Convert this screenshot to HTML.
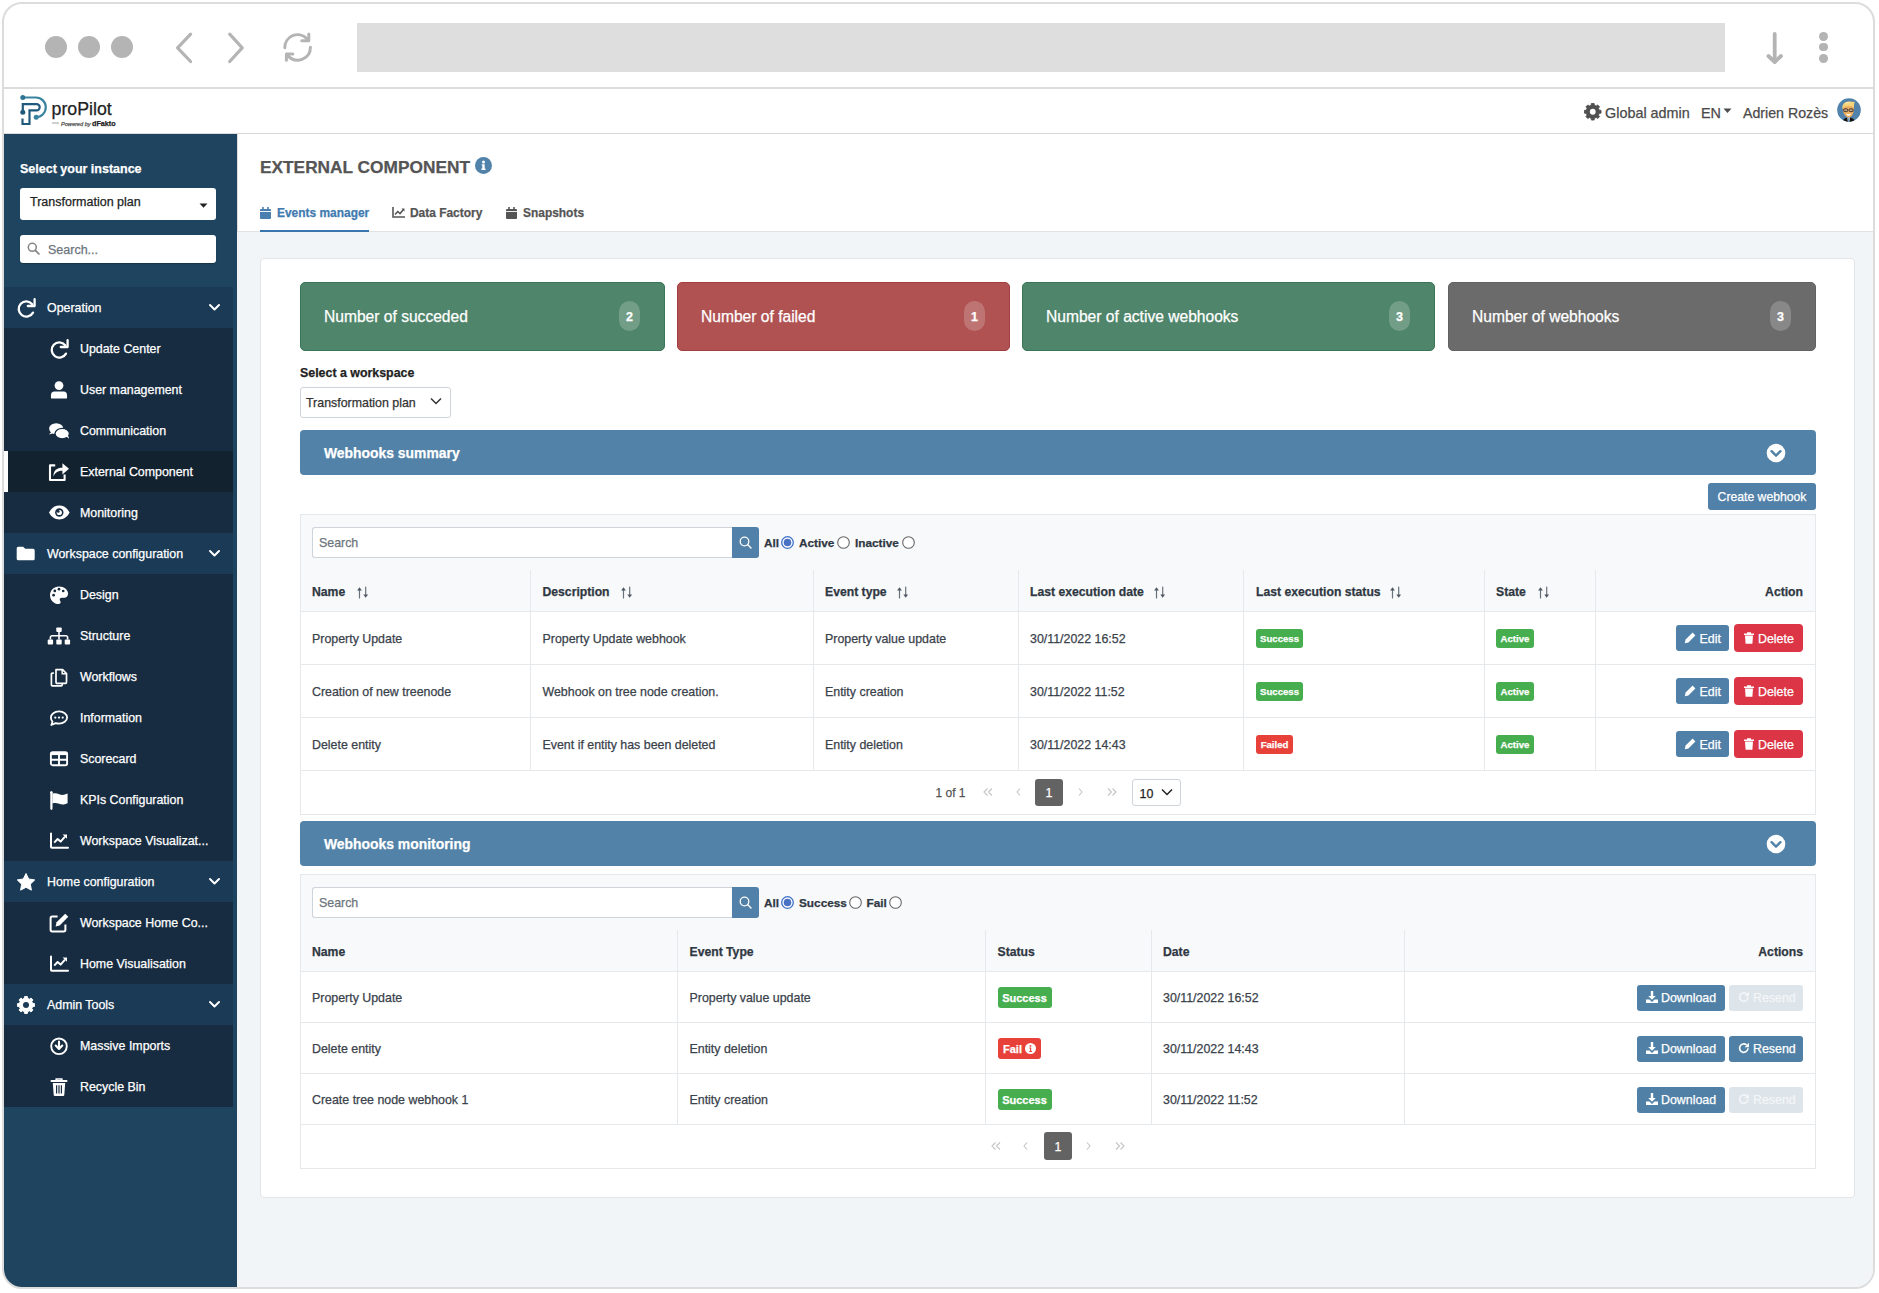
<!DOCTYPE html>
<html><head><meta charset="utf-8">
<style>
*{box-sizing:border-box;margin:0;padding:0}
html,body{width:1879px;height:1293px;background:#fff;overflow:hidden;font-family:"Liberation Sans",sans-serif;}
.abs{position:absolute}
#frame{position:absolute;left:2px;top:2px;width:1873px;height:1287px;border:2px solid #dcdcdc;border-radius:20px;overflow:hidden;background:#fff}
#pg{position:absolute;left:-4px;top:-4px;width:1879px;height:1293px}
.sep{position:absolute;background:#dcdcdc}
.dot{position:absolute;width:22px;height:22px;border-radius:50%;background:#b4b4b4}
#side{position:absolute;left:4px;top:134px;width:233px;height:1160px;background:#1e445f}
.sh{position:absolute;left:4px;width:229px;height:41px;background:#1b3955;color:#fff;font-size:13px}
.si{position:absolute;left:4px;width:229px;height:41px;background:#172b3f;color:#fff;font-size:13px}
.txt{position:absolute;white-space:nowrap;-webkit-text-stroke:0.25px currentColor}
.st{font-size:12.4px;color:#fff}
#main{position:absolute;left:237px;top:134px;width:1636px;height:1160px;background:#f2f5f7}

</style></head><body>
<div id="frame"><div id="pg">
<!-- toolbar -->
  <div class="dot" style="left:45px;top:36px"></div>
  <div class="dot" style="left:78px;top:36px"></div>
  <div class="dot" style="left:111px;top:36px"></div>
  <svg class="abs" style="left:170px;top:28px" width="80" height="40" viewBox="0 0 80 40">
    <polyline points="20.6,6.2 7.6,19.8 20.6,33.5" fill="none" stroke="#b4b4b4" stroke-width="3.2" stroke-linecap="round" stroke-linejoin="round"/>
    <polyline points="59.7,6.2 72.2,19.8 59.7,33.5" fill="none" stroke="#b4b4b4" stroke-width="3.2" stroke-linecap="round" stroke-linejoin="round"/>
  </svg>
  <svg class="abs" style="left:280px;top:30px" width="36" height="36" viewBox="0 0 36 36">
    <path d="M4.8 17.8A12.8 12.8 0 0 1 26.8 8.6" fill="none" stroke="#b4b4b4" stroke-width="3" stroke-linecap="round"/>
    <path d="M30.4 17.2A12.8 12.8 0 0 1 8.6 26.4" fill="none" stroke="#b4b4b4" stroke-width="3" stroke-linecap="round"/>
    <polyline points="28.8,4 28.8,10.8 21.8,10.8" fill="none" stroke="#b4b4b4" stroke-width="3" stroke-linecap="round" stroke-linejoin="round"/>
    <polyline points="6.4,30.3 6.4,24 12.8,24" fill="none" stroke="#b4b4b4" stroke-width="3" stroke-linecap="round" stroke-linejoin="round"/>
  </svg>
  <div class="abs" style="left:357px;top:23px;width:1368px;height:49px;background:#dedede"></div>
  <svg class="abs" style="left:1760px;top:28px" width="30" height="40" viewBox="0 0 30 40">
    <line x1="14.7" y1="6" x2="14.7" y2="33" stroke="#b4b4b4" stroke-width="3.8" stroke-linecap="round"/>
    <polyline points="8.4,28 14.7,34 21,28" fill="none" stroke="#b4b4b4" stroke-width="3.8" stroke-linecap="round" stroke-linejoin="round"/>
  </svg>
  <div class="abs" style="left:1819px;top:31.8px;width:8.8px;height:8.8px;border-radius:50%;background:#b4b4b4"></div>
  <div class="abs" style="left:1819px;top:42.6px;width:8.8px;height:8.8px;border-radius:50%;background:#b4b4b4"></div>
  <div class="abs" style="left:1819px;top:54.1px;width:8.8px;height:8.8px;border-radius:50%;background:#b4b4b4"></div>
  <div class="sep" style="left:0;top:87px;width:1879px;height:2px"></div>

  
<!-- app header -->
<div class="sep" style="left:0;top:133px;width:1879px;height:1px;background:#d9d9d9"></div>
<svg class="abs" style="left:15px;top:90px" width="40" height="40" viewBox="0 0 40 40">
  <path d="M7.8 7.5H21A9.8 9.8 0 0 1 21 27.1" fill="none" stroke="#3a83a0" stroke-width="2.2"/>
  <circle cx="7.8" cy="7.5" r="2.5" fill="#2f7593"/>
  <circle cx="21.2" cy="27.2" r="2.5" fill="#3a83a0"/>
  <path d="M7.8 22.3V14.2H21.6A3.1 3.1 0 0 1 21.6 20.4H14.5V34H7.5V28.5" fill="none" stroke="#1f5a7c" stroke-width="2.2"/>
  <circle cx="7.8" cy="22.3" r="2.5" fill="#1f5a7c"/>
</svg>
<div class="txt" style="left:51.5px;top:98.5px;line-height:20px;font-size:17.8px;color:#222">proPilot</div>
<div class="abs" style="left:51.6px;top:122px;width:7px;height:2px;background:#d0d0d0"></div>
<div class="txt" style="left:61px;top:119.5px;line-height:7px;font-size:5.6px;color:#555;font-style:italic">Powered by <b style="font-size:7.2px;font-style:normal;color:#222">dFakto</b></div>
<svg class="abs" style="left:1584px;top:103px" width="17.5" height="17.5" viewBox="0 0 20 20"><path d="M8.17 2.62 L8.42 0.53 L11.58 0.53 L11.83 2.62 L13.92 3.49 L15.58 2.19 L17.81 4.42 L16.51 6.08 L17.38 8.17 L19.47 8.42 L19.47 11.58 L17.38 11.83 L16.51 13.92 L17.81 15.58 L15.58 17.81 L13.92 16.51 L11.83 17.38 L11.58 19.47 L8.42 19.47 L8.17 17.38 L6.08 16.51 L4.42 17.81 L2.19 15.58 L3.49 13.92 L2.62 11.83 L0.53 11.58 L0.53 8.42 L2.62 8.17 L3.49 6.08 L2.19 4.42 L4.42 2.19 L6.08 3.49Z" fill="#505050" stroke="#505050" stroke-width="1" stroke-linejoin="round"/><circle cx="10" cy="10" r="3.3" fill="#fff"/></svg>
<div class="txt" style="left:1605px;top:102.6px;line-height:20px;font-size:14.4px;color:#4a4a4a">Global admin</div>
<div class="txt" style="left:1701px;top:102.6px;line-height:20px;font-size:14.4px;color:#4a4a4a">EN</div>
<svg class="abs" style="left:1723px;top:108px" width="9" height="6" viewBox="0 0 9 6"><path d="M0.5 0.5h8L4.5 5z" fill="#4a4a4a"/></svg>
<div class="txt" style="left:1743px;top:102.6px;line-height:20px;font-size:14.2px;color:#4a4a4a">Adrien Rozès</div>
<svg class="abs" style="left:1837px;top:98px" width="24" height="24" viewBox="0 0 24 24">
  <defs><clipPath id="av"><circle cx="12" cy="12" r="11.8"/></clipPath></defs>
  <circle cx="12" cy="12" r="11.8" fill="#5182ab"/>
  <g clip-path="url(#av)">
    <path d="M5.5 24c.5-3 2.5-4.6 6.2-4.6s5.8 1.6 6.2 4.6z" fill="#111"/>
    <path d="M10.3 19.6h2.6l-.6 4.4h-1.4z" fill="#fff"/>
    <path d="M11 20.2h1.2l-.1 3.8h-1z" fill="#5a9ad6"/>
    <path d="M5.8 10.5c0-2.5 2.2-3.8 5.6-3.8s5.6 1.5 5.6 3.6c0 4.5-2 9.2-5.2 9.2-3.4 0-6-4.5-6-9z" fill="#f0b060"/>
    <path d="M5.4 11c-.3-4.5 2-7.4 6.4-7.4 2.8 0 4.6.5 6 .2-.5 1.4-.8 2.6-.8 5.4-2-1-4.5-1.4-7-1.2-2 .2-3.6 1.2-4.6 3z" fill="#f6d27a"/>
    <path d="M7.5 5.5c1.5-1 4-1.3 6.5-.8-1.5.4-4 .6-6.5.8z" fill="#fff3c0"/>
    <rect x="6.6" y="10.8" width="4.2" height="2.8" rx="1.2" fill="#c9a07a" stroke="#2a2a2a" stroke-width=".9"/>
    <rect x="12" y="10.8" width="4.2" height="2.8" rx="1.2" fill="#c9a07a" stroke="#2a2a2a" stroke-width=".9"/>
    <path d="M9.2 15.6c1.5.9 3.3.9 4.8 0-.4 1.6-1.3 2.2-2.4 2.2s-2-.6-2.4-2.2z" fill="#fff"/>
  </g>
</svg>

<div id="side"></div>


  <div class="txt" style="left:20px;top:159px;line-height:21px;font-size:12.5px;font-weight:bold;color:#fff">Select your instance</div>
  <div class="abs" style="left:20px;top:188px;width:196px;height:32px;background:#fff;border-radius:3px"></div>
  <div class="txt" style="left:30px;top:192.3px;line-height:21px;font-size:12.5px;color:#222">Transformation plan</div>
  <svg class="abs" style="left:199px;top:203px" width="9" height="5" viewBox="0 0 9 5"><path d="M0.5 0.5h8L4.5 4.8z" fill="#222"/></svg>
  <div class="abs" style="left:20px;top:235px;width:196px;height:28px;background:#fff;border-radius:3px;box-shadow:0 1px 1px rgba(0,0,0,.25)"></div>
  <svg class="abs" style="left:27px;top:242px" width="13" height="13" viewBox="0 0 13 13"><circle cx="5.3" cy="5.3" r="4" fill="none" stroke="#888" stroke-width="1.6"/><path d="M8.3 8.3l3.6 3.6" stroke="#888" stroke-width="1.8" stroke-linecap="round"/></svg>
  <div class="txt" style="left:48px;top:240px;line-height:21px;font-size:12.5px;color:#6c757d">Search...</div>
<div class="sh" style="top:287px;background:#1a3a55"></div>
<svg class="abs" style="left:16px;top:297.5px;overflow:visible" width="20" height="20" viewBox="0 0 20 20"><path d="M16.2 6.2A7.6 7.6 0 1 0 17 14.6" fill="none" stroke="#fff" stroke-width="2.3" stroke-linecap="round"/><path d="M18.6 1.2v6.8h-6.8" fill="none" stroke="#fff" stroke-width="2.3" stroke-linecap="round" stroke-linejoin="round"/></svg>
<div class="txt st" style="left:47px;top:287.6px;line-height:41px">Operation</div>
<svg class="abs" style="left:208px;top:303px" width="13" height="9" viewBox="0 0 13 9"><polyline points="2,2 6.5,6.5 11,2" fill="none" stroke="#fff" stroke-width="2" stroke-linecap="round" stroke-linejoin="round"/></svg>
<div class="si" style="top:328px;background:#172c40"></div>
<svg class="abs" style="left:49px;top:338.5px;overflow:visible" width="20" height="20" viewBox="0 0 20 20"><path d="M16.2 6.2A7.6 7.6 0 1 0 17 14.6" fill="none" stroke="#fff" stroke-width="2.3" stroke-linecap="round"/><path d="M18.6 1.2v6.8h-6.8" fill="none" stroke="#fff" stroke-width="2.3" stroke-linecap="round" stroke-linejoin="round"/></svg>
<div class="txt st" style="left:80px;top:328.6px;line-height:41px">Update Center</div>
<div class="si" style="top:369px;background:#172c40"></div>
<svg class="abs" style="left:49px;top:379.5px;overflow:visible" width="20" height="20" viewBox="0 0 20 20"><circle cx="10" cy="5.6" r="4.4" fill="#fff"/><path d="M4.6 11.6h10.8a4.2 4.2 0 0 1 4.2 4.2v1.6a1.2 1.2 0 0 1-1.2 1.2H1.6a1.2 1.2 0 0 1-1.2-1.2v-1.6a4.2 4.2 0 0 1 4.2-4.2z" fill="#fff" transform="translate(1.6 0) scale(.84 1)"/></svg>
<div class="txt st" style="left:80px;top:369.6px;line-height:41px">User management</div>
<div class="si" style="top:410px;background:#172c40"></div>
<svg class="abs" style="left:49px;top:420.5px;overflow:visible" width="20" height="20" viewBox="0 0 20 20"><ellipse cx="7.2" cy="7.6" rx="7.1" ry="5.4" fill="#fff"/><path d="M0 13.4l3.2-3.5 2.2 2.2z" fill="#fff"/><ellipse cx="13.2" cy="12.6" rx="7.2" ry="5.2" fill="#fff" stroke="#172c40" stroke-width="1.3"/><path d="M20.2 17.8l-3.6-2.8 2-1.5z" fill="#fff"/></svg>
<div class="txt st" style="left:80px;top:410.6px;line-height:41px">Communication</div>
<div class="si" style="top:451px;background:#13222f"></div>
<div class="abs" style="left:4px;top:451px;width:4px;height:41px;background:#fff"></div>
<svg class="abs" style="left:49px;top:461.5px;overflow:visible" width="20" height="20" viewBox="0 0 20 20"><path d="M6.2 3.4H1v14.6h14.6v-5.6" fill="none" stroke="#fff" stroke-width="2.1" stroke-linejoin="round"/><path d="M4.4 14.5c0-6.2 3.5-8.8 9-8.8V1.2l6.6 5.6-6.6 5.6V8.8c-4 0-7.2 1.4-9 5.7z" fill="#fff"/></svg>
<div class="txt st" style="left:80px;top:451.6px;line-height:41px">External Component</div>
<div class="si" style="top:492px;background:#172c40"></div>
<svg class="abs" style="left:49px;top:502.5px;overflow:visible" width="20" height="20" viewBox="0 0 20 20"><path d="M0 9.5C2.6 4.6 6 2.6 10.3 2.6S18 4.6 20.6 9.5c-2.6 4.9-6 6.9-10.3 6.9S2.6 14.4 0 9.5z" fill="#fff"/><circle cx="10.3" cy="9.5" r="4.2" fill="#172c40"/><circle cx="10.3" cy="9.5" r="2.6" fill="#fff"/><circle cx="9.2" cy="8.4" r="1.4" fill="#172c40"/></svg>
<div class="txt st" style="left:80px;top:492.6px;line-height:41px">Monitoring</div>
<div class="sh" style="top:533px;background:#1a3a55"></div>
<svg class="abs" style="left:16px;top:543.5px;overflow:visible" width="20" height="20" viewBox="0 0 20 20"><path d="M0.7 4.2a1.5 1.5 0 0 1 1.5-1.5h5l2 2.1h7.9a1.6 1.6 0 0 1 1.6 1.6v8.4a1.5 1.5 0 0 1-1.5 1.5H2.2a1.5 1.5 0 0 1-1.5-1.5z" fill="#fff"/></svg>
<div class="txt st" style="left:47px;top:533.6px;line-height:41px">Workspace configuration</div>
<svg class="abs" style="left:208px;top:549px" width="13" height="9" viewBox="0 0 13 9"><polyline points="2,2 6.5,6.5 11,2" fill="none" stroke="#fff" stroke-width="2" stroke-linecap="round" stroke-linejoin="round"/></svg>
<div class="si" style="top:574px;background:#172c40"></div>
<svg class="abs" style="left:49px;top:584.5px;overflow:visible" width="20" height="20" viewBox="0 0 20 20"><path d="M10 1.5C5 1.5 1 5.4 1 10.2c0 4.9 4 8.9 8.6 8.9 1.5 0 2-1 2-2 0-1.2-.9-1.4-.9-2.5 0-1.1.8-1.8 2-1.8h2.6c2.2 0 3.8-1.7 3.8-4C19.1 4.6 15 1.5 10 1.5z" fill="#fff"/><circle cx="4.6" cy="10.2" r="1.35" fill="#172c40"/><circle cx="5.8" cy="5.9" r="1.35" fill="#172c40"/><circle cx="10" cy="4.2" r="1.35" fill="#172c40"/><circle cx="14.2" cy="6" r="1.35" fill="#172c40"/></svg>
<div class="txt st" style="left:80px;top:574.6px;line-height:41px">Design</div>
<div class="si" style="top:615px;background:#172c40"></div>
<svg class="abs" style="left:49px;top:625.5px;overflow:visible" width="20" height="20" viewBox="0 0 20 20"><rect x="7.3" y="1.4" width="5.4" height="4.6" rx=".9" fill="#fff"/><rect x="-1.3" y="13.6" width="5.4" height="4.9" rx=".9" fill="#fff"/><rect x="7.3" y="13.6" width="5.4" height="4.9" rx=".9" fill="#fff"/><rect x="15.7" y="13.6" width="5.4" height="4.9" rx=".9" fill="#fff"/><path d="M10 6v7.6M1.4 13.6v-2.2a1.6 1.6 0 0 1 1.6-1.6h14a1.6 1.6 0 0 1 1.6 1.6v2.2" fill="none" stroke="#fff" stroke-width="1.6"/></svg>
<div class="txt st" style="left:80px;top:615.6px;line-height:41px">Structure</div>
<div class="si" style="top:656px;background:#172c40"></div>
<svg class="abs" style="left:49px;top:666.5px;overflow:visible" width="20" height="20" viewBox="0 0 20 20"><path d="M7 2.6h6.6l3.9 3.9v8.8c0 .6-.4 1-1 1H8c-.6 0-1-.4-1-1z" fill="none" stroke="#fff" stroke-width="1.7" stroke-linejoin="round"/><path d="M13.2 2.6v4.2h4.2" fill="none" stroke="#fff" stroke-width="1.5"/><path d="M4.8 6.2H3.4c-.6 0-1 .4-1 1v10.6c0 .6.4 1 1 1h8.8c.6 0 1-.4 1-1v-1.4" fill="none" stroke="#fff" stroke-width="1.7" stroke-linejoin="round"/></svg>
<div class="txt st" style="left:80px;top:656.6px;line-height:41px">Workflows</div>
<div class="si" style="top:697px;background:#172c40"></div>
<svg class="abs" style="left:49px;top:707.5px;overflow:visible" width="20" height="20" viewBox="0 0 20 20"><path d="M10 3.4c4.5 0 8.1 2.7 8.1 6.1s-3.6 6.1-8.1 6.1c-1.2 0-2.3-.2-3.3-.5L2.3 17l1.2-3.3C2.5 12.6 1.9 11.1 1.9 9.5c0-3.4 3.6-6.1 8.1-6.1z" fill="none" stroke="#fff" stroke-width="1.8" stroke-linejoin="round"/><circle cx="6.3" cy="9.6" r="1.15" fill="#fff"/><circle cx="10" cy="9.6" r="1.15" fill="#fff"/><circle cx="13.7" cy="9.6" r="1.15" fill="#fff"/></svg>
<div class="txt st" style="left:80px;top:697.6px;line-height:41px">Information</div>
<div class="si" style="top:738px;background:#172c40"></div>
<svg class="abs" style="left:49px;top:748.5px;overflow:visible" width="20" height="20" viewBox="0 0 20 20"><rect x="1.9" y="3.1" width="16.2" height="13.1" rx="1.8" fill="none" stroke="#fff" stroke-width="1.9"/><rect x="1.9" y="3.1" width="16.2" height="3" fill="#fff"/><path d="M1.9 10.8h16.2M10 5v11" stroke="#fff" stroke-width="1.9"/></svg>
<div class="txt st" style="left:80px;top:738.6px;line-height:41px">Scorecard</div>
<div class="si" style="top:779px;background:#172c40"></div>
<svg class="abs" style="left:49px;top:789.5px;overflow:visible" width="20" height="20" viewBox="0 0 20 20"><path d="M2.4 2.6v16.2" stroke="#fff" stroke-width="2.2" stroke-linecap="round"/><circle cx="2.4" cy="2.4" r="1.2" fill="#fff"/><path d="M3.4 3.8c2.4-1 4.6-.4 6.8.4 2.4.9 4.6 1.1 8.4-.6v9.6c-3.8 1.7-6 1.5-8.4.6-2.2-.8-4.4-1.4-6.8-.4z" fill="#fff"/></svg>
<div class="txt st" style="left:80px;top:779.6px;line-height:41px">KPIs Configuration</div>
<div class="si" style="top:820px;background:#172c40"></div>
<svg class="abs" style="left:49px;top:830.5px;overflow:visible" width="20" height="20" viewBox="0 0 20 20"><path d="M2 2.5v13.4c0 .5.3.8.8.8H19" fill="none" stroke="#fff" stroke-width="2" stroke-linecap="round"/><path d="M5.2 11.6l3.4-3.6 3 2.6 4.4-5" fill="none" stroke="#fff" stroke-width="2" stroke-linejoin="round"/><path d="M13.6 3.4h4.4v4.4z" fill="#fff"/></svg>
<div class="txt st" style="left:80px;top:820.6px;line-height:41px">Workspace Visualizat...</div>
<div class="sh" style="top:861px;background:#1a3a55"></div>
<svg class="abs" style="left:16px;top:871.5px;overflow:visible" width="20" height="20" viewBox="0 0 20 20"><path d="M10 1.5l2.7 5.5 6 .9-4.35 4.25 1.03 6L10 15.3l-5.38 2.85 1.03-6L1.3 7.9l6-.9z" fill="#fff" stroke="#fff" stroke-width="1" stroke-linejoin="round"/></svg>
<div class="txt st" style="left:47px;top:861.6px;line-height:41px">Home configuration</div>
<svg class="abs" style="left:208px;top:877px" width="13" height="9" viewBox="0 0 13 9"><polyline points="2,2 6.5,6.5 11,2" fill="none" stroke="#fff" stroke-width="2" stroke-linecap="round" stroke-linejoin="round"/></svg>
<div class="si" style="top:902px;background:#172c40"></div>
<svg class="abs" style="left:49px;top:912.5px;overflow:visible" width="20" height="20" viewBox="0 0 20 20"><path d="M8.6 3.6H3.2c-.9 0-1.6.7-1.6 1.6v11.6c0 .9.7 1.6 1.6 1.6h11.6c.9 0 1.6-.7 1.6-1.6v-5.4" fill="none" stroke="#fff" stroke-width="2" stroke-linejoin="round"/><path d="M16.2 0.7l3.1 3.1-8.6 8.6-4.1 1 1-4.1z" fill="#fff"/></svg>
<div class="txt st" style="left:80px;top:902.6px;line-height:41px">Workspace Home Co...</div>
<div class="si" style="top:943px;background:#172c40"></div>
<svg class="abs" style="left:49px;top:953.5px;overflow:visible" width="20" height="20" viewBox="0 0 20 20"><path d="M2 2.5v13.4c0 .5.3.8.8.8H19" fill="none" stroke="#fff" stroke-width="2" stroke-linecap="round"/><path d="M5.2 11.6l3.4-3.6 3 2.6 4.4-5" fill="none" stroke="#fff" stroke-width="2" stroke-linejoin="round"/><path d="M13.6 3.4h4.4v4.4z" fill="#fff"/></svg>
<div class="txt st" style="left:80px;top:943.6px;line-height:41px">Home Visualisation</div>
<div class="sh" style="top:984px;background:#1a3a55"></div>
<svg class="abs" style="left:16px;top:994.5px;overflow:visible" width="20" height="20" viewBox="0 0 20 20"><path d="M8.17 2.62 L8.42 0.53 L11.58 0.53 L11.83 2.62 L13.92 3.49 L15.58 2.19 L17.81 4.42 L16.51 6.08 L17.38 8.17 L19.47 8.42 L19.47 11.58 L17.38 11.83 L16.51 13.92 L17.81 15.58 L15.58 17.81 L13.92 16.51 L11.83 17.38 L11.58 19.47 L8.42 19.47 L8.17 17.38 L6.08 16.51 L4.42 17.81 L2.19 15.58 L3.49 13.92 L2.62 11.83 L0.53 11.58 L0.53 8.42 L2.62 8.17 L3.49 6.08 L2.19 4.42 L4.42 2.19 L6.08 3.49Z" fill="#fff" stroke="#fff" stroke-width="1" stroke-linejoin="round" transform="translate(1 1) scale(.9)"/><circle cx="10" cy="10" r="3" fill="#1a3a55"/></svg>
<div class="txt st" style="left:47px;top:984.6px;line-height:41px">Admin Tools</div>
<svg class="abs" style="left:208px;top:1000px" width="13" height="9" viewBox="0 0 13 9"><polyline points="2,2 6.5,6.5 11,2" fill="none" stroke="#fff" stroke-width="2" stroke-linecap="round" stroke-linejoin="round"/></svg>
<div class="si" style="top:1025px;background:#172c40"></div>
<svg class="abs" style="left:49px;top:1035.5px;overflow:visible" width="20" height="20" viewBox="0 0 20 20"><circle cx="10" cy="10.3" r="7.8" fill="none" stroke="#fff" stroke-width="1.9"/><path d="M10 5.6v7.2M6.7 9.6l3.3 3.3 3.3-3.3" fill="none" stroke="#fff" stroke-width="2.1" stroke-linecap="round" stroke-linejoin="round"/></svg>
<div class="txt st" style="left:80px;top:1025.6px;line-height:41px">Massive Imports</div>
<div class="si" style="top:1066px;background:#172c40"></div>
<svg class="abs" style="left:49px;top:1076.5px;overflow:visible" width="20" height="20" viewBox="0 0 20 20"><path d="M2.6 4h14.8" stroke="#fff" stroke-width="2.2" stroke-linecap="round"/><path d="M7.2 3.6V2h5.6v1.6" fill="none" stroke="#fff" stroke-width="1.6"/><path d="M3.8 6h12.4l-.9 12a1.2 1.2 0 0 1-1.2 1.1H5.9a1.2 1.2 0 0 1-1.2-1.1z" fill="#fff"/><path d="M7.6 8.2v8.4M10 8.2v8.4M12.4 8.2v8.4" stroke="#172c40" stroke-width="1.2"/></svg>
<div class="txt st" style="left:80px;top:1066.6px;line-height:41px">Recycle Bin</div>
<div id="main"></div>
<div class="abs" style="left:237px;top:134px;width:1636px;height:98px;background:#fff;border-bottom:1px solid #dfe3e6;border-left:1px solid #dcdcdc"></div>
<div class="txt" style="left:260px;top:157.3px;line-height:20px;font-size:17.3px;color:#555;font-weight:bold;">EXTERNAL COMPONENT</div>
<svg class="abs" style="left:474.7px;top:156.5px" width="17" height="17" viewBox="0 0 17 17"><circle cx="8.5" cy="8.5" r="8.5" fill="#5082aa"/><circle cx="8.5" cy="5.1" r="1.5" fill="#fff"/><path d="M6.7 7.3h3v4.3h0.8v1.3H6.4v-1.3h0.9V8.6H6.7z" fill="#fff"/></svg>
<svg class="abs" style="left:260px;top:207px" width="11" height="12" viewBox="0 0 11 12"><rect x="0" y="2" width="11" height="10" rx="1" fill="#4a7fb0"/><rect x="2.2" y="0" width="1.6" height="3" fill="#4a7fb0"/><rect x="7.2" y="0" width="1.6" height="3" fill="#4a7fb0"/><rect x="0" y="4" width="11" height=".9" fill="#fff"/></svg>
<div class="txt" style="left:277px;top:203.0px;line-height:20px;font-size:11.95px;color:#3f7bb0;font-weight:bold;">Events manager</div>
<div class="abs" style="left:260px;top:230px;width:109px;height:2px;background:#3a76ad"></div>
<svg class="abs" style="left:392px;top:207px" width="13" height="11" viewBox="0 0 13 11"><path d="M1 0v10h12" fill="none" stroke="#555" stroke-width="1.6"/><path d="M3 7.5l2.8-3 2.2 2 3.5-4" fill="none" stroke="#555" stroke-width="1.6"/><path d="M9.5 1.5h3v3z" fill="#555"/></svg>
<div class="txt" style="left:410px;top:203.0px;line-height:20px;font-size:11.95px;color:#555;font-weight:bold;">Data Factory</div>
<svg class="abs" style="left:506px;top:207px" width="11" height="12" viewBox="0 0 11 12"><rect x="0" y="2" width="11" height="10" rx="1" fill="#555"/><rect x="2.2" y="0" width="1.6" height="3" fill="#555"/><rect x="7.2" y="0" width="1.6" height="3" fill="#555"/><rect x="0" y="4" width="11" height=".9" fill="#fff"/></svg>
<div class="txt" style="left:523px;top:203.0px;line-height:20px;font-size:11.95px;color:#555;font-weight:bold;">Snapshots</div>
<div class="abs" style="left:260px;top:258px;width:1595px;height:940px;background:#fff;border:1px solid #e3e5e8;border-radius:4px"></div>
<div class="abs" style="left:300px;top:282px;width:365px;height:69px;background:#4f856a;border:1px solid #3a7556;border-radius:5px"></div>
<div class="txt" style="left:324px;top:307.1px;line-height:20px;font-size:15.6px;color:#fff;">Number of succeded</div>
<div class="abs" style="left:619px;top:301px;width:21px;height:30px;background:rgba(255,255,255,.2);border-radius:10.5px"></div>
<div class="txt" style="left:529.5px;width:200px;text-align:center;top:307.1px;line-height:20px;font-size:12.5px;color:#fff;font-weight:bold;">2</div>
<div class="abs" style="left:677px;top:282px;width:333px;height:69px;background:#b05252;border:1px solid #a33d40;border-radius:5px"></div>
<div class="txt" style="left:701px;top:307.1px;line-height:20px;font-size:15.6px;color:#fff;">Number of failed</div>
<div class="abs" style="left:964px;top:301px;width:21px;height:30px;background:rgba(255,255,255,.2);border-radius:10.5px"></div>
<div class="txt" style="left:874.5px;width:200px;text-align:center;top:307.1px;line-height:20px;font-size:12.5px;color:#fff;font-weight:bold;">1</div>
<div class="abs" style="left:1022px;top:282px;width:413px;height:69px;background:#4f856a;border:1px solid #3a7556;border-radius:5px"></div>
<div class="txt" style="left:1046px;top:307.1px;line-height:20px;font-size:15.6px;color:#fff;">Number of active webhooks</div>
<div class="abs" style="left:1389px;top:301px;width:21px;height:30px;background:rgba(255,255,255,.2);border-radius:10.5px"></div>
<div class="txt" style="left:1299.5px;width:200px;text-align:center;top:307.1px;line-height:20px;font-size:12.5px;color:#fff;font-weight:bold;">3</div>
<div class="abs" style="left:1448px;top:282px;width:368px;height:69px;background:#6b6b6b;border:1px solid #626262;border-radius:5px"></div>
<div class="txt" style="left:1472px;top:307.1px;line-height:20px;font-size:15.6px;color:#fff;">Number of webhooks</div>
<div class="abs" style="left:1770px;top:301px;width:21px;height:30px;background:rgba(255,255,255,.2);border-radius:10.5px"></div>
<div class="txt" style="left:1680.5px;width:200px;text-align:center;top:307.1px;line-height:20px;font-size:12.5px;color:#fff;font-weight:bold;">3</div>
<div class="txt" style="left:300px;top:362.6px;line-height:20px;font-size:12.4px;color:#222;font-weight:bold;">Select a workspace</div>
<div class="abs" style="left:300px;top:387px;width:151px;height:31px;background:#fff;border:1px solid #ced4da;border-radius:3px"></div>
<div class="txt" style="left:306px;top:393.1px;line-height:20px;font-size:12.4px;color:#333;">Transformation plan</div>
<svg class="abs" style="left:430px;top:397px" width="12" height="8" viewBox="0 0 12 8"><polyline points="1,1.5 6,6.5 11,1.5" fill="none" stroke="#333" stroke-width="1.5"/></svg>
<div class="abs" style="left:300px;top:430px;width:1516px;height:45px;background:#5282a7;border-radius:4px"></div>
<div class="txt" style="left:324px;top:443.1px;line-height:20px;font-size:13.9px;color:#fff;font-weight:bold;">Webhooks summary</div>
<svg class="abs" style="left:1766px;top:442.5px" width="20" height="20" viewBox="0 0 20 20"><circle cx="10" cy="10" r="9.3" fill="#fff"/><polyline points="5.6,8.2 10,12.6 14.4,8.2" fill="none" stroke="#5282a7" stroke-width="2.4" stroke-linecap="round" stroke-linejoin="round"/></svg>
<div class="abs" style="left:1708px;top:483px;width:108px;height:27px;background:#5180a8;border-radius:3px"></div>
<div class="txt" style="left:1662px;width:200px;text-align:center;top:486.6px;line-height:20px;font-size:12.2px;color:#fff;">Create webhook</div>
<div class="abs" style="left:300px;top:514px;width:1516px;height:301px;background:#fff;border:1px solid #e6e9ec"></div>
<div class="abs" style="left:301px;top:515px;width:1514px;height:56px;background:#f8f9fa;border-bottom:1px solid #e6e9ec"></div>
<div class="abs" style="left:312px;top:527px;width:420px;height:31px;background:#fff;border:1px solid #ced4da;border-right:0;border-radius:3px 0 0 3px"></div>
<div class="txt" style="left:319px;top:533.1px;line-height:20px;font-size:12.4px;color:#6c757d;">Search</div>
<div class="abs" style="left:732px;top:527px;width:27px;height:31px;background:#5180a8;border-radius:0 3px 3px 0"></div>
<svg class="abs" style="left:739px;top:536px" width="13" height="13" viewBox="0 0 13 13"><circle cx="5.5" cy="5.5" r="4.3" fill="none" stroke="#fff" stroke-width="1.3"/><path d="M8.6 8.6l3.4 3.4" stroke="#fff" stroke-width="1.4" stroke-linecap="round"/></svg>
<div class="txt" style="left:764px;top:533.1px;line-height:20px;font-size:11.8px;color:#2f3842;font-weight:bold;">All</div>
<svg class="abs" style="left:781px;top:536.0px" width="13" height="13" viewBox="0 0 13 13"><circle cx="6.5" cy="6.5" r="5.8" fill="#fff" stroke="#3b6fc9" stroke-width="1.3"/><circle cx="6.5" cy="6.5" r="3.8" fill="#4a72c4"/></svg>
<div class="txt" style="left:799px;top:533.1px;line-height:20px;font-size:11.8px;color:#2f3842;font-weight:bold;">Active</div>
<svg class="abs" style="left:837px;top:536.0px" width="13" height="13" viewBox="0 0 13 13"><circle cx="6.5" cy="6.5" r="5.8" fill="#fff" stroke="#666" stroke-width="1.1"/></svg>
<div class="txt" style="left:855px;top:533.1px;line-height:20px;font-size:11.8px;color:#2f3842;font-weight:bold;">Inactive</div>
<svg class="abs" style="left:902px;top:536.0px" width="13" height="13" viewBox="0 0 13 13"><circle cx="6.5" cy="6.5" r="5.8" fill="#fff" stroke="#666" stroke-width="1.1"/></svg>
<div class="abs" style="left:301px;top:570px;width:1514px;height:42px;background:#f8f9fa;border-bottom:1px solid #e6e9ec"></div>
<div class="abs" style="left:530px;top:570px;width:1px;height:201px;background:#e6e9ec"></div>
<div class="abs" style="left:813px;top:570px;width:1px;height:201px;background:#e6e9ec"></div>
<div class="abs" style="left:1018px;top:570px;width:1px;height:201px;background:#e6e9ec"></div>
<div class="abs" style="left:1243px;top:570px;width:1px;height:201px;background:#e6e9ec"></div>
<div class="abs" style="left:1484px;top:570px;width:1px;height:201px;background:#e6e9ec"></div>
<div class="abs" style="left:1595px;top:570px;width:1px;height:201px;background:#e6e9ec"></div>
<div class="txt" style="left:312px;top:582.1px;line-height:20px;font-size:12.2px;color:#2f3842;font-weight:bold;">Name</div>
<svg class="abs" style="left:356px;top:585.5px" width="13" height="13" viewBox="0 0 13 13"><path d="M3.5 12V3.5M9.7 1v8.5" fill="none" stroke="#68727b" stroke-width="1.2" stroke-linecap="round"/><path d="M1.1 4.6L3.5 1.3 5.9 4.6z M7.3 8.4l2.4 3.3 2.4-3.3z" fill="#4f5963"/></svg>
<div class="txt" style="left:542.5px;top:582.1px;line-height:20px;font-size:12.2px;color:#2f3842;font-weight:bold;">Description</div>
<svg class="abs" style="left:620px;top:585.5px" width="13" height="13" viewBox="0 0 13 13"><path d="M3.5 12V3.5M9.7 1v8.5" fill="none" stroke="#68727b" stroke-width="1.2" stroke-linecap="round"/><path d="M1.1 4.6L3.5 1.3 5.9 4.6z M7.3 8.4l2.4 3.3 2.4-3.3z" fill="#4f5963"/></svg>
<div class="txt" style="left:825px;top:582.1px;line-height:20px;font-size:12.2px;color:#2f3842;font-weight:bold;">Event type</div>
<svg class="abs" style="left:896px;top:585.5px" width="13" height="13" viewBox="0 0 13 13"><path d="M3.5 12V3.5M9.7 1v8.5" fill="none" stroke="#68727b" stroke-width="1.2" stroke-linecap="round"/><path d="M1.1 4.6L3.5 1.3 5.9 4.6z M7.3 8.4l2.4 3.3 2.4-3.3z" fill="#4f5963"/></svg>
<div class="txt" style="left:1030px;top:582.1px;line-height:20px;font-size:12.2px;color:#2f3842;font-weight:bold;">Last execution date</div>
<svg class="abs" style="left:1153px;top:585.5px" width="13" height="13" viewBox="0 0 13 13"><path d="M3.5 12V3.5M9.7 1v8.5" fill="none" stroke="#68727b" stroke-width="1.2" stroke-linecap="round"/><path d="M1.1 4.6L3.5 1.3 5.9 4.6z M7.3 8.4l2.4 3.3 2.4-3.3z" fill="#4f5963"/></svg>
<div class="txt" style="left:1256px;top:582.1px;line-height:20px;font-size:12.2px;color:#2f3842;font-weight:bold;">Last execution status</div>
<svg class="abs" style="left:1389px;top:585.5px" width="13" height="13" viewBox="0 0 13 13"><path d="M3.5 12V3.5M9.7 1v8.5" fill="none" stroke="#68727b" stroke-width="1.2" stroke-linecap="round"/><path d="M1.1 4.6L3.5 1.3 5.9 4.6z M7.3 8.4l2.4 3.3 2.4-3.3z" fill="#4f5963"/></svg>
<div class="txt" style="left:1496px;top:582.1px;line-height:20px;font-size:12.2px;color:#2f3842;font-weight:bold;">State</div>
<svg class="abs" style="left:1537px;top:585.5px" width="13" height="13" viewBox="0 0 13 13"><path d="M3.5 12V3.5M9.7 1v8.5" fill="none" stroke="#68727b" stroke-width="1.2" stroke-linecap="round"/><path d="M1.1 4.6L3.5 1.3 5.9 4.6z M7.3 8.4l2.4 3.3 2.4-3.3z" fill="#4f5963"/></svg>
<div class="txt" style="right:76px;top:582.1px;line-height:20px;font-size:12.2px;color:#2f3842;font-weight:bold;">Action</div>
<div class="abs" style="left:301px;top:664px;width:1514px;height:1px;background:#e6e9ec"></div>
<div class="txt" style="left:312px;top:628.6px;line-height:20px;font-size:12.4px;color:#3a424b;">Property Update</div>
<div class="txt" style="left:542.5px;top:628.6px;line-height:20px;font-size:12.4px;color:#3a424b;">Property Update webhook</div>
<div class="txt" style="left:825px;top:628.6px;line-height:20px;font-size:12.4px;color:#3a424b;">Property value update</div>
<div class="txt" style="left:1030px;top:628.6px;line-height:20px;font-size:12.4px;color:#3a424b;">30/11/2022 16:52</div>
<div class="abs" style="left:1256px;top:628.5px;width:47px;height:19px;background:#47ae4f;border-radius:3px"></div>
<div class="txt" style="left:1179.5px;width:200px;text-align:center;top:628.6px;line-height:20px;font-size:9.6px;color:#fff;font-weight:bold;">Success</div>
<div class="abs" style="left:1496px;top:628.5px;width:38px;height:19px;background:#47ae4f;border-radius:3px"></div>
<div class="txt" style="left:1415px;width:200px;text-align:center;top:628.6px;line-height:20px;font-size:9.6px;color:#fff;font-weight:bold;">Active</div>
<div class="abs" style="left:1676px;top:625px;width:53px;height:26px;background:#5080a8;border-radius:3px"></div>
<svg class="abs" style="left:1684px;top:632px" width="12" height="12" viewBox="0 0 12 12"><path d="M8.6 0.6l2.8 2.8-7 7L0.8 11.2l.8-3.6z" fill="#fff"/></svg>
<div class="txt" style="left:1699.5px;top:628.6px;line-height:20px;font-size:12.4px;color:#fff;">Edit</div>
<div class="abs" style="left:1734px;top:624px;width:69px;height:28px;background:#dc3545;border-radius:4px"></div>
<svg class="abs" style="left:1744px;top:631.5px" width="10" height="12" viewBox="0 0 10 12"><path d="M0 1.5h10v1.4H0z M3 0.3h4v1.5H3z M1 3.5h8l-.6 8.2H1.6z" fill="#fff"/></svg>
<div class="txt" style="left:1758px;top:628.6px;line-height:20px;font-size:12.4px;color:#fff;">Delete</div>
<div class="abs" style="left:301px;top:717px;width:1514px;height:1px;background:#e6e9ec"></div>
<div class="txt" style="left:312px;top:681.6px;line-height:20px;font-size:12.4px;color:#3a424b;">Creation of new treenode</div>
<div class="txt" style="left:542.5px;top:681.6px;line-height:20px;font-size:12.4px;color:#3a424b;">Webhook on tree node creation.</div>
<div class="txt" style="left:825px;top:681.6px;line-height:20px;font-size:12.4px;color:#3a424b;">Entity creation</div>
<div class="txt" style="left:1030px;top:681.6px;line-height:20px;font-size:12.4px;color:#3a424b;">30/11/2022 11:52</div>
<div class="abs" style="left:1256px;top:681.5px;width:47px;height:19px;background:#47ae4f;border-radius:3px"></div>
<div class="txt" style="left:1179.5px;width:200px;text-align:center;top:681.6px;line-height:20px;font-size:9.6px;color:#fff;font-weight:bold;">Success</div>
<div class="abs" style="left:1496px;top:681.5px;width:38px;height:19px;background:#47ae4f;border-radius:3px"></div>
<div class="txt" style="left:1415px;width:200px;text-align:center;top:681.6px;line-height:20px;font-size:9.6px;color:#fff;font-weight:bold;">Active</div>
<div class="abs" style="left:1676px;top:678px;width:53px;height:26px;background:#5080a8;border-radius:3px"></div>
<svg class="abs" style="left:1684px;top:685px" width="12" height="12" viewBox="0 0 12 12"><path d="M8.6 0.6l2.8 2.8-7 7L0.8 11.2l.8-3.6z" fill="#fff"/></svg>
<div class="txt" style="left:1699.5px;top:681.6px;line-height:20px;font-size:12.4px;color:#fff;">Edit</div>
<div class="abs" style="left:1734px;top:677px;width:69px;height:28px;background:#dc3545;border-radius:4px"></div>
<svg class="abs" style="left:1744px;top:684.5px" width="10" height="12" viewBox="0 0 10 12"><path d="M0 1.5h10v1.4H0z M3 0.3h4v1.5H3z M1 3.5h8l-.6 8.2H1.6z" fill="#fff"/></svg>
<div class="txt" style="left:1758px;top:681.6px;line-height:20px;font-size:12.4px;color:#fff;">Delete</div>
<div class="abs" style="left:301px;top:770px;width:1514px;height:1px;background:#e6e9ec"></div>
<div class="txt" style="left:312px;top:734.6px;line-height:20px;font-size:12.4px;color:#3a424b;">Delete entity</div>
<div class="txt" style="left:542.5px;top:734.6px;line-height:20px;font-size:12.4px;color:#3a424b;">Event if entity has been deleted</div>
<div class="txt" style="left:825px;top:734.6px;line-height:20px;font-size:12.4px;color:#3a424b;">Entity deletion</div>
<div class="txt" style="left:1030px;top:734.6px;line-height:20px;font-size:12.4px;color:#3a424b;">30/11/2022 14:43</div>
<div class="abs" style="left:1256px;top:734.5px;width:37px;height:19px;background:#e7413a;border-radius:3px"></div>
<div class="txt" style="left:1174.5px;width:200px;text-align:center;top:734.6px;line-height:20px;font-size:9.6px;color:#fff;font-weight:bold;">Failed</div>
<div class="abs" style="left:1496px;top:734.5px;width:38px;height:19px;background:#47ae4f;border-radius:3px"></div>
<div class="txt" style="left:1415px;width:200px;text-align:center;top:734.6px;line-height:20px;font-size:9.6px;color:#fff;font-weight:bold;">Active</div>
<div class="abs" style="left:1676px;top:731px;width:53px;height:26px;background:#5080a8;border-radius:3px"></div>
<svg class="abs" style="left:1684px;top:738px" width="12" height="12" viewBox="0 0 12 12"><path d="M8.6 0.6l2.8 2.8-7 7L0.8 11.2l.8-3.6z" fill="#fff"/></svg>
<div class="txt" style="left:1699.5px;top:734.6px;line-height:20px;font-size:12.4px;color:#fff;">Edit</div>
<div class="abs" style="left:1734px;top:730px;width:69px;height:28px;background:#dc3545;border-radius:4px"></div>
<svg class="abs" style="left:1744px;top:737.5px" width="10" height="12" viewBox="0 0 10 12"><path d="M0 1.5h10v1.4H0z M3 0.3h4v1.5H3z M1 3.5h8l-.6 8.2H1.6z" fill="#fff"/></svg>
<div class="txt" style="left:1758px;top:734.6px;line-height:20px;font-size:12.4px;color:#fff;">Delete</div>
<div class="txt" style="left:935.5px;top:783.1px;line-height:20px;font-size:12px;color:#555;">1 of 1</div>
<svg class="abs" style="left:982.5px;top:788px" width="10" height="8" viewBox="0 0 10 8"><path d="M4.5 0.5L1 4l3.5 3.5M9 0.5L5.5 4 9 7.5" fill="none" stroke="#c4c4c4" stroke-width="1.1"/></svg>
<svg class="abs" style="left:1016px;top:788px" width="5" height="8" viewBox="0 0 5 8"><path d="M4 0.5L1 4l3 3.5" fill="none" stroke="#c4c4c4" stroke-width="1.1"/></svg>
<div class="abs" style="left:1035px;top:779px;width:28px;height:27px;background:#636363;border-radius:3px"></div>
<div class="txt" style="left:949px;width:200px;text-align:center;top:783.1px;line-height:20px;font-size:12.4px;color:#fff;">1</div>
<svg class="abs" style="left:1077.5px;top:788px" width="5" height="8" viewBox="0 0 5 8"><path d="M1 0.5L4 4 1 7.5" fill="none" stroke="#c4c4c4" stroke-width="1.1"/></svg>
<svg class="abs" style="left:1106.5px;top:788px" width="10" height="8" viewBox="0 0 10 8"><path d="M1 0.5L4.5 4 1 7.5M5.5 0.5L9 4l-3.5 3.5" fill="none" stroke="#c4c4c4" stroke-width="1.1"/></svg>
<div class="abs" style="left:1132px;top:779px;width:49px;height:27px;background:#fff;border:1px solid #ced4da;border-radius:3px"></div>
<div class="txt" style="left:1139.5px;top:784.1px;line-height:20px;font-size:12.4px;color:#222;">10</div>
<svg class="abs" style="left:1161px;top:788px" width="12" height="8" viewBox="0 0 12 8"><polyline points="1,1.5 6,6.5 11,1.5" fill="none" stroke="#222" stroke-width="1.5"/></svg>
<div class="abs" style="left:300px;top:821px;width:1516px;height:45px;background:#5282a7;border-radius:4px"></div>
<div class="txt" style="left:324px;top:834.1px;line-height:20px;font-size:13.9px;color:#fff;font-weight:bold;">Webhooks monitoring</div>
<svg class="abs" style="left:1766px;top:833.5px" width="20" height="20" viewBox="0 0 20 20"><circle cx="10" cy="10" r="9.3" fill="#fff"/><polyline points="5.6,8.2 10,12.6 14.4,8.2" fill="none" stroke="#5282a7" stroke-width="2.4" stroke-linecap="round" stroke-linejoin="round"/></svg>
<div class="abs" style="left:300px;top:874px;width:1516px;height:295px;background:#fff;border:1px solid #e6e9ec"></div>
<div class="abs" style="left:301px;top:875px;width:1514px;height:56px;background:#f8f9fa;border-bottom:1px solid #e6e9ec"></div>
<div class="abs" style="left:312px;top:887px;width:420px;height:31px;background:#fff;border:1px solid #ced4da;border-right:0;border-radius:3px 0 0 3px"></div>
<div class="txt" style="left:319px;top:893.1px;line-height:20px;font-size:12.4px;color:#6c757d;">Search</div>
<div class="abs" style="left:732px;top:887px;width:27px;height:31px;background:#5180a8;border-radius:0 3px 3px 0"></div>
<svg class="abs" style="left:739px;top:896px" width="13" height="13" viewBox="0 0 13 13"><circle cx="5.5" cy="5.5" r="4.3" fill="none" stroke="#fff" stroke-width="1.3"/><path d="M8.6 8.6l3.4 3.4" stroke="#fff" stroke-width="1.4" stroke-linecap="round"/></svg>
<div class="txt" style="left:764px;top:893.1px;line-height:20px;font-size:11.8px;color:#2f3842;font-weight:bold;">All</div>
<svg class="abs" style="left:781px;top:896.0px" width="13" height="13" viewBox="0 0 13 13"><circle cx="6.5" cy="6.5" r="5.8" fill="#fff" stroke="#3b6fc9" stroke-width="1.3"/><circle cx="6.5" cy="6.5" r="3.8" fill="#4a72c4"/></svg>
<div class="txt" style="left:799px;top:893.1px;line-height:20px;font-size:11.8px;color:#2f3842;font-weight:bold;">Success</div>
<svg class="abs" style="left:849px;top:896.0px" width="13" height="13" viewBox="0 0 13 13"><circle cx="6.5" cy="6.5" r="5.8" fill="#fff" stroke="#666" stroke-width="1.1"/></svg>
<div class="txt" style="left:866.5px;top:893.1px;line-height:20px;font-size:11.8px;color:#2f3842;font-weight:bold;">Fail</div>
<svg class="abs" style="left:889px;top:896.0px" width="13" height="13" viewBox="0 0 13 13"><circle cx="6.5" cy="6.5" r="5.8" fill="#fff" stroke="#666" stroke-width="1.1"/></svg>
<div class="abs" style="left:301px;top:930px;width:1514px;height:42px;background:#f8f9fa;border-bottom:1px solid #e6e9ec"></div>
<div class="abs" style="left:677px;top:930px;width:1px;height:195px;background:#e6e9ec"></div>
<div class="abs" style="left:985px;top:930px;width:1px;height:195px;background:#e6e9ec"></div>
<div class="abs" style="left:1151px;top:930px;width:1px;height:195px;background:#e6e9ec"></div>
<div class="abs" style="left:1404px;top:930px;width:1px;height:195px;background:#e6e9ec"></div>
<div class="txt" style="left:312px;top:941.6px;line-height:20px;font-size:12.2px;color:#2f3842;font-weight:bold;">Name</div>
<div class="txt" style="left:689.5px;top:941.6px;line-height:20px;font-size:12.2px;color:#2f3842;font-weight:bold;">Event Type</div>
<div class="txt" style="left:997.5px;top:941.6px;line-height:20px;font-size:12.2px;color:#2f3842;font-weight:bold;">Status</div>
<div class="txt" style="left:1163px;top:941.6px;line-height:20px;font-size:12.2px;color:#2f3842;font-weight:bold;">Date</div>
<div class="txt" style="right:76px;top:941.6px;line-height:20px;font-size:12.2px;color:#2f3842;font-weight:bold;">Actions</div>
<div class="abs" style="left:301px;top:1022px;width:1514px;height:1px;background:#e6e9ec"></div>
<div class="txt" style="left:312px;top:988.1px;line-height:20px;font-size:12.4px;color:#3a424b;">Property Update</div>
<div class="txt" style="left:689.5px;top:988.1px;line-height:20px;font-size:12.4px;color:#3a424b;">Property value update</div>
<div class="txt" style="left:1163px;top:988.1px;line-height:20px;font-size:12.4px;color:#3a424b;">30/11/2022 16:52</div>
<div class="abs" style="left:997.5px;top:987.0px;width:54px;height:21px;background:#47ae4f;border-radius:3px"></div>
<div class="txt" style="left:924.5px;width:200px;text-align:center;top:988.1px;line-height:20px;font-size:11px;color:#fff;font-weight:bold;">Success</div>
<div class="abs" style="left:1637px;top:984.5px;width:88px;height:26px;background:#5080a6;border-radius:3px"></div>
<svg class="abs" style="left:1646px;top:991.0px" width="12" height="12" viewBox="0 0 12 12"><path d="M4.8 0h2.4v5h2.6L6 8.8 2.2 5h2.6z M0 8.5h3.5L6 11l2.5-2.5H12V12H0z" fill="#fff"/></svg>
<div class="txt" style="left:1661px;top:988.1px;line-height:20px;font-size:12.4px;color:#fff;">Download</div>
<div class="abs" style="left:1729px;top:984.5px;width:74px;height:26px;background:#dde4ea;border-radius:3px"></div>
<svg class="abs" style="left:1738px;top:991.0px" width="12" height="12" viewBox="0 0 12 12"><path d="M10 6.2A4.2 4.2 0 1 1 8.6 3" fill="none" stroke="#f4f6f8" stroke-width="1.6"/><path d="M11 0.8v4.4H6.6z" fill="#f4f6f8"/></svg>
<div class="txt" style="left:1753px;top:988.1px;line-height:20px;font-size:12.4px;color:#f4f6f8;">Resend</div>
<div class="abs" style="left:301px;top:1073px;width:1514px;height:1px;background:#e6e9ec"></div>
<div class="txt" style="left:312px;top:1039.1px;line-height:20px;font-size:12.4px;color:#3a424b;">Delete entity</div>
<div class="txt" style="left:689.5px;top:1039.1px;line-height:20px;font-size:12.4px;color:#3a424b;">Entity deletion</div>
<div class="txt" style="left:1163px;top:1039.1px;line-height:20px;font-size:12.4px;color:#3a424b;">30/11/2022 14:43</div>
<div class="abs" style="left:997.5px;top:1038.0px;width:43px;height:21px;background:#e7413a;border-radius:3px"></div>
<div class="txt" style="left:1003px;top:1039.1px;line-height:20px;font-size:11px;color:#fff;font-weight:bold;">Fail</div>
<svg class="abs" style="left:1025px;top:1043.0px" width="11" height="11" viewBox="0 0 11 11"><circle cx="5.5" cy="5.5" r="5.5" fill="#fff"/><circle cx="5.5" cy="2.9" r=".9" fill="#e7413a"/><path d="M4.3 4.5h1.9v3.6H7v1H4.3v-1h.8V5.5h-.8z" fill="#e7413a"/></svg>
<div class="abs" style="left:1637px;top:1035.5px;width:88px;height:26px;background:#5080a6;border-radius:3px"></div>
<svg class="abs" style="left:1646px;top:1042.0px" width="12" height="12" viewBox="0 0 12 12"><path d="M4.8 0h2.4v5h2.6L6 8.8 2.2 5h2.6z M0 8.5h3.5L6 11l2.5-2.5H12V12H0z" fill="#fff"/></svg>
<div class="txt" style="left:1661px;top:1039.1px;line-height:20px;font-size:12.4px;color:#fff;">Download</div>
<div class="abs" style="left:1729px;top:1035.5px;width:74px;height:26px;background:#5080a6;border-radius:3px"></div>
<svg class="abs" style="left:1738px;top:1042.0px" width="12" height="12" viewBox="0 0 12 12"><path d="M10 6.2A4.2 4.2 0 1 1 8.6 3" fill="none" stroke="#fff" stroke-width="1.6"/><path d="M11 0.8v4.4H6.6z" fill="#fff"/></svg>
<div class="txt" style="left:1753px;top:1039.1px;line-height:20px;font-size:12.4px;color:#fff;">Resend</div>
<div class="abs" style="left:301px;top:1124px;width:1514px;height:1px;background:#e6e9ec"></div>
<div class="txt" style="left:312px;top:1090.1px;line-height:20px;font-size:12.4px;color:#3a424b;">Create tree node webhook 1</div>
<div class="txt" style="left:689.5px;top:1090.1px;line-height:20px;font-size:12.4px;color:#3a424b;">Entity creation</div>
<div class="txt" style="left:1163px;top:1090.1px;line-height:20px;font-size:12.4px;color:#3a424b;">30/11/2022 11:52</div>
<div class="abs" style="left:997.5px;top:1089.0px;width:54px;height:21px;background:#47ae4f;border-radius:3px"></div>
<div class="txt" style="left:924.5px;width:200px;text-align:center;top:1090.1px;line-height:20px;font-size:11px;color:#fff;font-weight:bold;">Success</div>
<div class="abs" style="left:1637px;top:1086.5px;width:88px;height:26px;background:#5080a6;border-radius:3px"></div>
<svg class="abs" style="left:1646px;top:1093.0px" width="12" height="12" viewBox="0 0 12 12"><path d="M4.8 0h2.4v5h2.6L6 8.8 2.2 5h2.6z M0 8.5h3.5L6 11l2.5-2.5H12V12H0z" fill="#fff"/></svg>
<div class="txt" style="left:1661px;top:1090.1px;line-height:20px;font-size:12.4px;color:#fff;">Download</div>
<div class="abs" style="left:1729px;top:1086.5px;width:74px;height:26px;background:#dde4ea;border-radius:3px"></div>
<svg class="abs" style="left:1738px;top:1093.0px" width="12" height="12" viewBox="0 0 12 12"><path d="M10 6.2A4.2 4.2 0 1 1 8.6 3" fill="none" stroke="#f4f6f8" stroke-width="1.6"/><path d="M11 0.8v4.4H6.6z" fill="#f4f6f8"/></svg>
<div class="txt" style="left:1753px;top:1090.1px;line-height:20px;font-size:12.4px;color:#f4f6f8;">Resend</div>
<svg class="abs" style="left:990.5px;top:1142px" width="10" height="8" viewBox="0 0 10 8"><path d="M4.5 0.5L1 4l3.5 3.5M9 0.5L5.5 4 9 7.5" fill="none" stroke="#c4c4c4" stroke-width="1.1"/></svg>
<svg class="abs" style="left:1022.5px;top:1142px" width="5" height="8" viewBox="0 0 5 8"><path d="M4 0.5L1 4l3 3.5" fill="none" stroke="#c4c4c4" stroke-width="1.1"/></svg>
<div class="abs" style="left:1044px;top:1132px;width:28px;height:28px;background:#636363;border-radius:3px"></div>
<div class="txt" style="left:958px;width:200px;text-align:center;top:1137.1px;line-height:20px;font-size:12.4px;color:#fff;">1</div>
<svg class="abs" style="left:1085.5px;top:1142px" width="5" height="8" viewBox="0 0 5 8"><path d="M1 0.5L4 4 1 7.5" fill="none" stroke="#c4c4c4" stroke-width="1.1"/></svg>
<svg class="abs" style="left:1115px;top:1142px" width="10" height="8" viewBox="0 0 10 8"><path d="M1 0.5L4.5 4 1 7.5M5.5 0.5L9 4l-3.5 3.5" fill="none" stroke="#c4c4c4" stroke-width="1.1"/></svg>
</div></div>
</body></html>
